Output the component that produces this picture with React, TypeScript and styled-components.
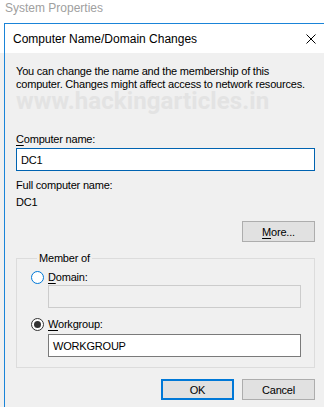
import styled, { createGlobalStyle } from 'styled-components';

const GlobalStyle = createGlobalStyle`
  html, body {
    margin: 0;
    padding: 0;
    background: #ffffff;
    overflow: hidden;
  }
  body {
    font-family: "Liberation Sans", Arial, sans-serif;
  }
`;

const Screen = styled.div`
  width: 324px;
  height: 407px;
  overflow: hidden;
  display: flex;
  flex-direction: column;
  background: linear-gradient(#ffffff 0 53px, #f0f0f0 53px);
`;

const ParentCaption = styled.div`
  height: 23px;
  padding-left: 5px;
  font-size: 12px;
  line-height: 16px;
  color: #a0a0a0;
`;

const Dialog = styled.div`
  margin-left: 4px;
  width: 340px;
  flex: 1;
  border-top: 1px solid #1a84d8;
  border-left: 1px solid #1a84d8;
  background: #f0f0f0;
  display: flex;
  flex-direction: column;
`;

const TitleBar = styled.div`
  height: 29px;
  flex-shrink: 0;
  background: #ffffff;
  display: flex;
  align-items: center;
  justify-content: space-between;
  padding-left: 8px;
  width: 315px;
  box-sizing: border-box;
  font-size: 12px;
  color: #000;
  box-shadow: 20px 0 0 #ffffff;
`;

const CloseButton = styled.div`
  width: 10px;
  height: 10px;
  margin-right: 4px;
  display: flex;
`;

const Body = styled.div`
  padding: 12px 0 0 11px;
  width: 299px;
  display: flex;
  flex-direction: column;
  font-size: 11px;
  letter-spacing: -0.2px;
  color: #000;
  white-space: nowrap;
`;

const Intro = styled.p`
  margin: 0;
  line-height: 13px;
`;

const Watermark = styled.div`
  font-family: Roboto, "Liberation Sans", sans-serif;
  font-weight: 700;
  font-size: 24px;
  line-height: 20px;
  letter-spacing: 0.1px;
  color: #e3e3e3;
`;

const Label = styled.div<{ $top?: number }>`
  margin-top: ${({ $top }) => $top ?? 0}px;
  line-height: 16px;
`;

const Key = styled.span`
  text-decoration: underline;
  text-underline-offset: 2px;
`;

const TextBox = styled.div<{ $variant: 'focus' | 'normal' | 'disabled'; $top?: number }>`
  box-sizing: border-box;
  height: 23px;
  margin-top: ${({ $top }) => $top ?? 0}px;
  padding-left: 4px;
  display: flex;
  align-items: center;
  border: 1px solid
    ${({ $variant }) =>
      $variant === 'focus' ? '#0063b1' : $variant === 'disabled' ? '#cccccc' : '#7a7a7a'};
  background: ${({ $variant }) => ($variant === 'disabled' ? '#f0f0f0' : '#ffffff')};
`;

const ButtonRow = styled.div<{ $top: number }>`
  margin-top: ${({ $top }) => $top}px;
  display: flex;
  justify-content: flex-end;
  gap: 8px;
`;

const Button = styled.div<{ $default?: boolean }>`
  box-sizing: border-box;
  width: 73px;
  height: 21px;
  display: flex;
  align-items: center;
  justify-content: center;
  background: #e1e1e1;
  border: ${({ $default }) => ($default ? '2px solid #0078d7' : '1px solid #adadad')};
`;

const GroupBox = styled.fieldset`
  margin: 9px 0 0;
  padding: 4px 13px 10px 14px;
  border: 1px solid #dcdcdc;
  min-width: 0;
  display: flex;
  flex-direction: column;
`;

const Legend = styled.legend`
  padding: 0 2px;
  margin-left: 6px;
  line-height: 14px;
`;

const RadioRow = styled.div<{ $top?: number }>`
  display: flex;
  align-items: center;
  gap: 4px;
  height: 16px;
  margin-top: ${({ $top }) => $top ?? 0}px;
`;

const RadioCircle = styled.div<{ $checked?: boolean }>`
  box-sizing: border-box;
  width: 13px;
  height: 13px;
  border-radius: 50%;
  background: #ffffff;
  border: 1px solid ${({ $checked }) => ($checked ? '#333333' : '#0078d7')};
  display: flex;
  align-items: center;
  justify-content: center;

  &::after {
    content: '';
    width: 7px;
    height: 7px;
    border-radius: 50%;
    background: #333333;
    display: ${({ $checked }) => ($checked ? 'block' : 'none')};
  }
`;

const Indented = styled.div`
  padding-left: 17px;
  display: flex;
  flex-direction: column;
`;

export default function App() {
  return (
    <>
      <GlobalStyle />
      <Screen>
        <ParentCaption>System Properties</ParentCaption>
        <Dialog>
          <TitleBar>
            <span>Computer Name/Domain Changes</span>
            <CloseButton>
              <svg width="10" height="10" viewBox="0 0 10 10">
                <path d="M0.5 0.5 L9.5 9.5 M9.5 0.5 L0.5 9.5" stroke="#000" strokeWidth="1" />
              </svg>
            </CloseButton>
          </TitleBar>
          <Body>
            <Intro>
              You can change the name and the membership of this
              <br />
              computer. Changes might affect access to network resources.
            </Intro>
            <Watermark>www.hackingarticles.in</Watermark>
            <Label $top={20}>
              <Key>C</Key>omputer name:
            </Label>
            <TextBox $variant="focus" $top={1}>DC1</TextBox>
            <Label $top={6}>Full computer name:</Label>
            <Label $top={1}>DC1</Label>
            <ButtonRow $top={11}>
              <Button>
                <span>
                  <Key>M</Key>ore...
                </span>
              </Button>
            </ButtonRow>
            <GroupBox>
              <Legend>Member of</Legend>
              <RadioRow>
                <RadioCircle />
                <span>
                  <Key>D</Key>omain:
                </span>
              </RadioRow>
              <Indented>
                <TextBox $variant="disabled" $top={0} />
              </Indented>
              <RadioRow $top={8}>
                <RadioCircle $checked />
                <span>
                  <Key>W</Key>orkgroup:
                </span>
              </RadioRow>
              <Indented>
                <TextBox $variant="normal" $top={2}>WORKGROUP</TextBox>
              </Indented>
            </GroupBox>
            <ButtonRow $top={11}>
              <Button $default>OK</Button>
              <Button>Cancel</Button>
            </ButtonRow>
          </Body>
        </Dialog>
      </Screen>
    </>
  );
}
